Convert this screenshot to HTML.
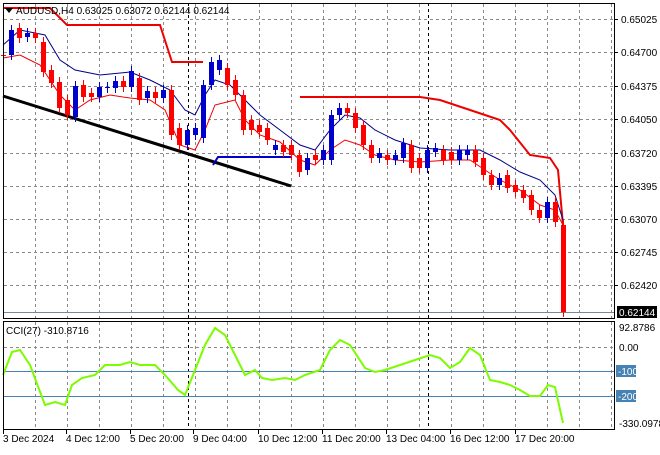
<!DOCTYPE html>
<html><head><meta charset="utf-8"><style>
body{margin:0;background:#fff;width:660px;height:450px;overflow:hidden;font-family:"Liberation Sans",sans-serif}
svg text{font-family:"Liberation Sans",sans-serif;font-size:10px;fill:#000}
</style></head><body>
<svg id="s" width="660" height="450" xmlns="http://www.w3.org/2000/svg">
<rect width="660" height="450" fill="#fff"/>
<g id="grid" stroke="#8a8a8a" stroke-dasharray="3,3" stroke-width="1"></g>
<line x1="188.5" y1="3" x2="188.5" y2="430" stroke="#000" stroke-dasharray="3,3"/>
<line x1="428.5" y1="3" x2="428.5" y2="430" stroke="#000" stroke-dasharray="3,3"/>
<line x1="3" y1="312.5" x2="614" y2="312.5" stroke="#778899"/>
<line x1="3" y1="371.5" x2="614" y2="371.5" stroke="#4682b4"/>
<line x1="3" y1="396.5" x2="614" y2="396.5" stroke="#4682b4"/>
<polyline fill="none" stroke="#e00" stroke-width="2" points="3,8 50,8 67,25 160,25 172,62 203,62"/>
<polyline fill="none" stroke="#e00" stroke-width="2" points="300,97 420,97 440,100 485,115 500,120 510,130 530,155 550,158 558,170 563,225"/>
<polyline fill="none" stroke="#00008b" stroke-width="1" points="3,45 20,30 45,35 60,60 75,70 100,75 130,72 150,80 170,90 185,110 195,115 205,95 215,80 230,85 245,100 260,115 280,130 300,145 315,150 330,130 345,115 360,118 375,130 395,140 420,148 450,150 480,150 500,160 520,172 540,180 555,195 563,220"/>
<polyline fill="none" stroke="#e00" stroke-width="1" points="3,58 20,55 40,65 60,95 75,110 90,100 110,95 130,98 150,100 165,110 180,145 195,150 205,130 215,105 235,100 245,120 260,135 280,142 300,160 315,165 330,150 345,140 360,145 375,155 395,160 420,162 450,160 470,160 485,170 500,180 520,190 540,205 555,210 563,225"/>
<line x1="3" y1="96" x2="291" y2="186" stroke="#000" stroke-width="3"/>
<polyline fill="none" stroke="#0000cd" stroke-width="2" points="213,165 218,157 291,157"/>
<g id="c"></g>
<polyline fill="none" stroke="#7cfc00" stroke-width="2" points="3,375 12,352 20,350 30,365 45,405 55,402 65,405 72,385 82,378 95,375 105,365 120,365 130,362 140,365 155,365 165,375 178,390 185,395 195,370 205,345 215,328 225,335 235,355 245,375 255,370 262,378 272,380 285,378 295,380 305,375 320,370 330,350 340,340 350,345 365,368 375,372 385,370 400,365 415,360 430,355 440,358 450,368 460,362 470,348 480,355 490,380 500,382 510,385 520,390 530,396 540,396 548,385 555,387 563,423"/>
<rect x="3.5" y="3.5" width="611" height="315" fill="none" stroke="#000"/>
<rect x="3.5" y="321.5" width="611" height="108" fill="none" stroke="#000"/>
<g id="ax"></g>
<polygon points="5,8 13,8 9,13" fill="#000"/>
<text x="16" y="14">AUDUSD,H4  0.63025 0.63072 0.62144 0.62144</text>
<text x="6" y="334">CCI(27) -310.8716</text>
<rect x="617" y="306" width="40" height="12" fill="#000"/>
<text x="619" y="316" style="fill:#fff">0.62144</text>
<rect x="616" y="365" width="20" height="12" fill="#4682b4"/>
<text x="618" y="375" style="fill:#fff">-100</text>
<rect x="616" y="390" width="20" height="12" fill="#4682b4"/>
<text x="618" y="400" style="fill:#fff">-200</text>
<text x="619" y="331">92.8786</text>
<text x="619" y="351">0.00</text>
<text x="619" y="427">-330.0978</text>
</svg>
<script>
var ns="http://www.w3.org/2000/svg",g=document.getElementById('grid');
function el(p,t,a){var e=document.createElementNS(ns,t);for(var k in a)e.setAttribute(k,a[k]);p.appendChild(e);return e}
for(var x=35;x<614;x+=32){if(x==187||x==427)continue;el(g,'line',{x1:x+.5,y1:4,x2:x+.5,y2:318});el(g,'line',{x1:x+.5,y1:322,x2:x+.5,y2:430});}
var lv=[19,52,86,119,153,186,219,252,285];lv.forEach(function(y){el(g,'line',{x1:4,y1:y+.5,x2:614,y2:y+.5});});
el(g,'line',{x1:4,y1:347.5,x2:614,y2:347.5});
var ax=document.getElementById('ax');
var lab=['0.65025','0.64700','0.64375','0.64050','0.63720','0.63395','0.63070','0.62745','0.62420'];
lv.forEach(function(y,i){el(ax,'line',{x1:614,y1:y+.5,x2:618,y2:y+.5,stroke:'#000'});el(ax,'text',{x:621,y:y+4}).textContent=lab[i];});
var d=[['3 Dec 2024',3],['4 Dec 12:00',66],['5 Dec 20:00',130],['9 Dec 04:00',193],['10 Dec 12:00',258],['11 Dec 20:00',322],['13 Dec 04:00',386],['16 Dec 12:00',450],['17 Dec 20:00',515]];
d.forEach(function(a){el(ax,'line',{x1:a[1]+.5,y1:430,x2:a[1]+.5,y2:434,stroke:'#000'});el(ax,'text',{x:a[1],y:442}).textContent=a[0];});
var C=[[55,55],[55,30],[28,38],[37,33],[33,38],[42,72],[70,83],[82,108],[100,115],[117,86],[85,97],[93,97],[97,87],[88,87],[88,81],[81,87],[87,71],[78,100],[98,91],[92,98],[98,90],[90,135],[128,145],[145,130],[135,128],[138,85],[85,62],[70,60],[68,85],[80,95],[95,130],[120,130],[125,132],[128,140],[150,145],[145,152],[145,155],[155,172],[170,158],[155,160],[160,150],[160,115],[115,108],[108,113],[113,128],[125,145],[145,158],[158,153],[155,160],[160,155],[158,143],[145,168],[158,168],[168,150],[152,148],[150,160],[152,160],[160,150],[155,150],[150,162],[158,175],[175,185],[185,178],[175,188],[185,192],[190,198],[195,210],[210,218],[218,202],[202,222],[225,312]];
var cg=document.getElementById('c');
C.forEach(function(c,i){var x=3+8*i,o=c[0],cl=c[1],up=cl<o,col=up?'#00c':'#f00',t=Math.min(o,cl),b=Math.max(o,cl);
el(cg,'line',{x1:x+.5,y1:t-5,x2:x+.5,y2:b+5,stroke:col});
el(cg,'rect',{x:x-2,y:t,width:5,height:Math.max(b-t,1),fill:col});});
</script>
</body></html>
